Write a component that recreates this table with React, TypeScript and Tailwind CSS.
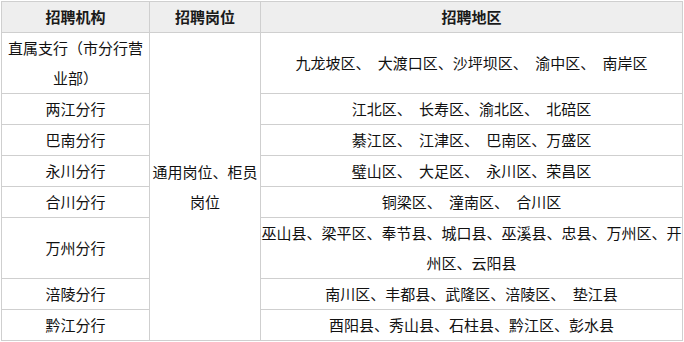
import React from 'react';

const rows = [
  { org: '直属支行（市分行营业部）', area: '九龙坡区、 大渡口区、沙坪坝区、 渝中区、 南岸区' },
  { org: '两江分行', area: '江北区、 长寿区、渝北区、 北碚区' },
  { org: '巴南分行', area: '綦江区、 江津区、 巴南区、万盛区' },
  { org: '永川分行', area: '璧山区、 大足区、 永川区、荣昌区' },
  { org: '合川分行', area: '铜梁区、 潼南区、 合川区' },
  { org: '万州分行', area: '巫山县、梁平区、奉节县、城口县、巫溪县、忠县、万州区、开州区、云阳县' },
  { org: '涪陵分行', area: '南川区、丰都县、武隆区、涪陵区、 垫江县' },
  { org: '黔江分行', area: '酉阳县、秀山县、石柱县、黔江区、彭水县' },
];

export default function App() {
  return (
    <div className="w-[684px] h-[342px] bg-white pl-px pt-px font-['Noto_Sans_CJK_SC','Noto_Sans',sans-serif] text-[15px] leading-[30px] text-[#111] [word-spacing:4px]">
      <table className="w-[681px] table-fixed border-collapse border border-[#cfcfcf] text-center">
        <colgroup>
          <col className="w-[148px]" />
          <col className="w-[111px]" />
          <col className="w-[422px]" />
        </colgroup>
        <thead>
          <tr className="bg-[#eeeeee]">
            <th className="border border-[#cfcfcf] p-0 font-bold text-[#1a1a1a]">招聘机构</th>
            <th className="border border-[#cfcfcf] p-0 font-bold text-[#1a1a1a]">招聘岗位</th>
            <th className="border border-[#cfcfcf] p-0 font-bold text-[#1a1a1a]">招聘地区</th>
          </tr>
        </thead>
        <tbody>
          {rows.map((r, i) => (
            <tr key={r.org}>
              <td className="border border-[#cfcfcf] p-0 align-middle">{r.org}</td>
              {i === 0 && (
                <td rowSpan={rows.length} className="border border-[#cfcfcf] p-0 align-middle">
                  通用岗位、柜员岗位
                </td>
              )}
              <td className="border border-[#cfcfcf] p-0 align-middle">{r.area}</td>
            </tr>
          ))}
        </tbody>
      </table>
    </div>
  );
}
